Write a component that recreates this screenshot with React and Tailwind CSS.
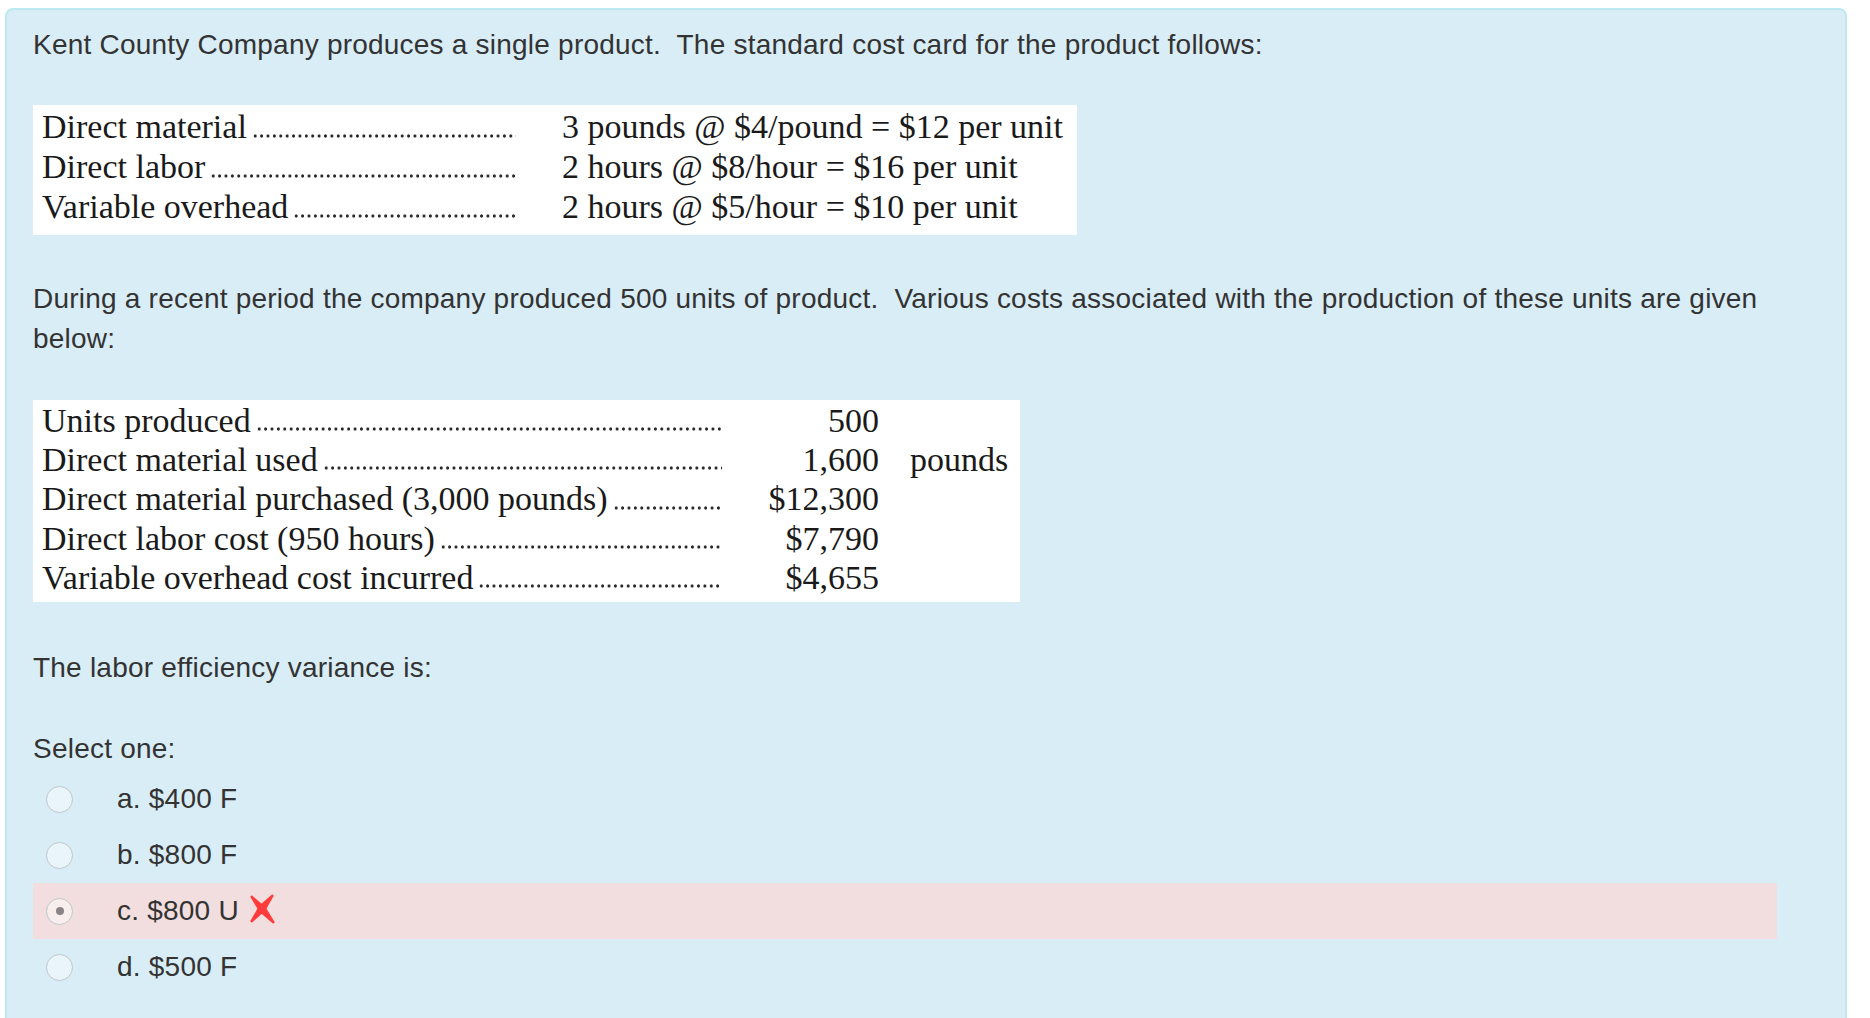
import React from "react"

const sans = { fontFamily: '"Liberation Sans", Arial, Helvetica, sans-serif' }
const serif = { fontFamily: '"Liberation Serif", "Times New Roman", serif' }

// dotted leader drawn as a repeating background so it never overflows
function Dots() {
  return (
    <span className="ml-[5px] mb-[8px] h-[6px] flex-1 self-end bg-[radial-gradient(circle,#2a2a2a_1.3px,transparent_1.9px)] bg-[length:6.4px_6px] bg-left-bottom bg-repeat-x" />
  )
}

function LeaderRow({ label, children }) {
  return (
    <div className="flex items-baseline">
      <div className="flex w-[474px] items-baseline whitespace-nowrap">
        <span>{label}</span>
        <Dots />
      </div>
      <div className="ml-[46px] whitespace-nowrap">{children}</div>
    </div>
  )
}

function CostRow({ label, value, unit }) {
  return (
    <div className="flex items-baseline">
      <div className="flex w-[680px] items-baseline whitespace-nowrap">
        <span>{label}</span>
        <Dots />
      </div>
      <div className="w-[157px] text-right whitespace-nowrap">{value}</div>
      <div className="ml-[31px] whitespace-nowrap">{unit}</div>
    </div>
  )
}

function RedX() {
  return (
    <svg width="26" height="30" viewBox="0 0 26 30" className="ml-[10px] -mt-[4px]">
      <polygon points="2.76,1.35 16.54,12.91 25.76,28.35 24.24,29.65 10.46,18.09 1.24,2.65" fill="#ff3b3b" />
      <polygon points="23.22,0.37 24.78,1.63 16.1,17.03 2.78,28.63 1.22,27.37 9.9,11.97" fill="#ff3b3b" />
    </svg>
  )
}

function Option({ letter, text, selected, wrong }) {
  return (
    <div className={"flex h-[56px] items-center " + (wrong ? "bg-[#f2dede]" : "")}>
      <div
        className={
          "ml-[13px] flex h-[27px] w-[27px] items-center justify-center rounded-full border-[1.5px] border-[#bfc6ca] " +
          (selected ? "bg-[#f8eeee]" : "bg-[#eaf4fb]")
        }
      >
        {selected && <div className="h-[8px] w-[8px] rounded-full bg-[#8a8486]" />}
      </div>
      <div className="ml-[44px] flex items-center">
        <span>
          {letter}. {text}
        </span>
        {wrong && <RedX />}
      </div>
    </div>
  )
}

export default function App() {
  return (
    <div className="min-h-screen w-[1870px] bg-white pl-[5px] pt-[8px]" style={sans}>
      <div className="min-h-[1040px] w-[1842px] rounded-[8px] border-2 border-[#bce8f1] bg-[#d9edf7] pb-[40px] pl-[26px] pr-[68px] pt-[15px] text-[28px] leading-[40px] tracking-[0.22px] text-[#333]">
        <p>Kent County Company produces a single product.&nbsp; The standard cost card for the product follows:</p>

        <div
          className="mt-[40px] w-[1044px] bg-white pb-[8px] pl-[9px] pt-[2px] text-[34px] leading-[40px] tracking-normal text-[#1a1a1a]"
          style={serif}
        >
          <LeaderRow label="Direct material">3 pounds @ $4/pound = $12 per unit</LeaderRow>
          <LeaderRow label="Direct labor">2 hours @ $8/hour = $16 per unit</LeaderRow>
          <LeaderRow label="Variable overhead">2 hours @ $5/hour = $10 per unit</LeaderRow>
        </div>

        <p className="mt-[44px]">
          During a recent period the company produced 500 units of product.&nbsp; Various costs associated with the
          production of these units are given below:
        </p>

        <div
          className="mt-[41px] w-[987px] bg-white pb-[5px] pl-[9px] pt-[1px] text-[34px] leading-[39.2px] tracking-normal text-[#1a1a1a]"
          style={serif}
        >
          <CostRow label="Units produced" value="500" />
          <CostRow label="Direct material used" value="1,600" unit="pounds" />
          <CostRow label="Direct material purchased (3,000 pounds)" value="$12,300" />
          <CostRow label="Direct labor cost (950 hours)" value="$7,790" />
          <CostRow label="Variable overhead cost incurred" value="$4,655" />
        </div>

        <p className="mt-[46px]">The labor efficiency variance is:</p>

        <p className="mt-[41px]">Select one:</p>
        <div className="mt-[2px]">
          <Option letter="a" text="$400 F" />
          <Option letter="b" text="$800 F" />
          <Option letter="c" text="$800 U" selected wrong />
          <Option letter="d" text="$500 F" />
        </div>
      </div>
    </div>
  )
}
